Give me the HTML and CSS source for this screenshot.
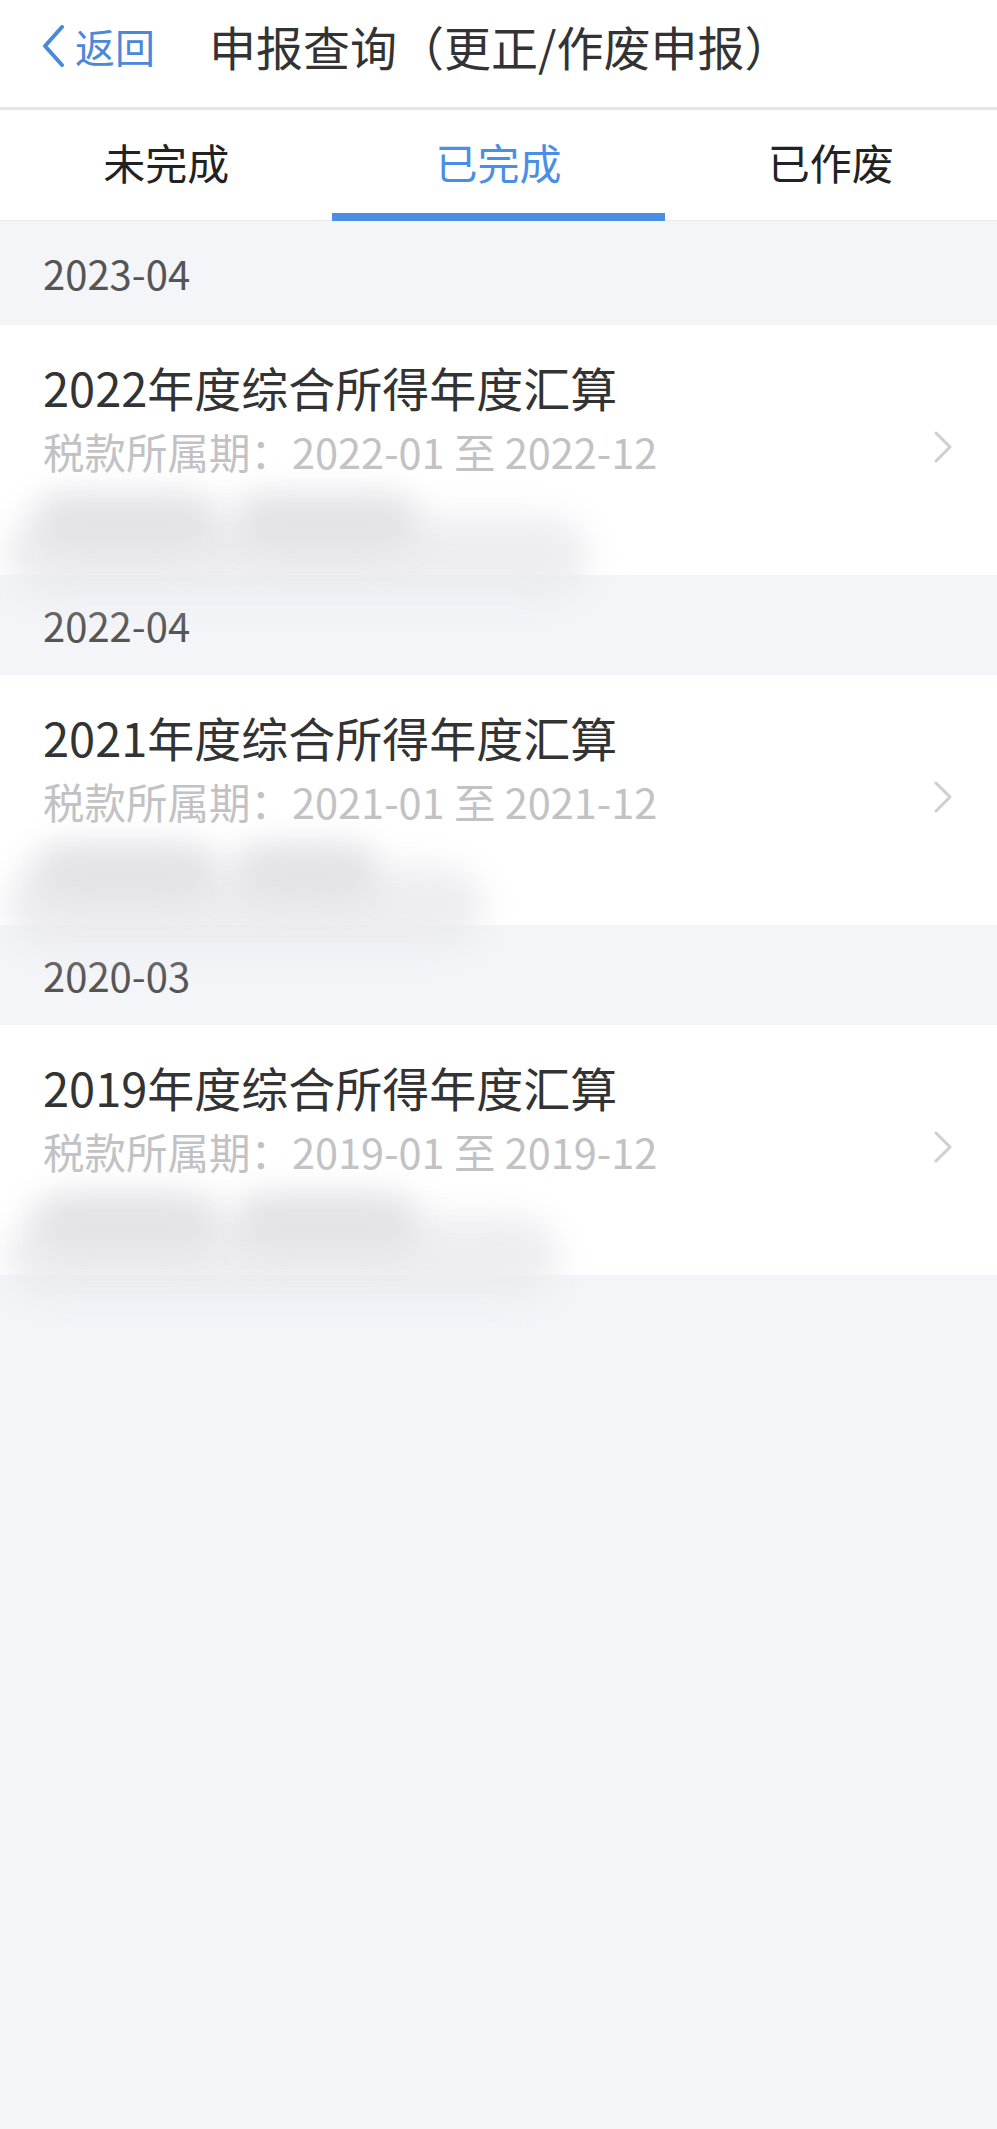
FILE: index.html
```html
<!DOCTYPE html>
<html lang="zh-CN">
<head>
    <meta charset="UTF-8">
    <meta name="viewport" content="width=device-width, initial-scale=1.0">
    <title>申报查询</title>
    <link rel="stylesheet" href="styles.css">
</head>
<body>

<header class="nav">
    <a class="back" href="#">
        <svg class="back-icon" viewBox="0 0 24 42" width="24" height="42">
            <path d="M21 2 L4 21 L21 40" fill="none" stroke="currentColor" stroke-width="4" stroke-linecap="round" stroke-linejoin="round"/>
        </svg>
        <span>返回</span>
    </a>
    <h1 class="title">申报查询（更正/作废申报）</h1>
</header>

<nav class="tabs">
    <div class="tab">未完成</div>
    <div class="tab active">已完成</div>
    <div class="tab">已作废</div>
</nav>

<main class="list">
    <div class="month first">2023-04</div>
    <div class="card">
        <div class="info">
            <div class="name">2022年度综合所得年度汇算</div>
            <div class="period">税款所属期：2022-01 至 2022-12</div>
        </div>
        <svg class="arrow" viewBox="0 0 20 32" width="20" height="32">
            <path d="M3 2 L17 16 L3 30" fill="none" stroke="currentColor" stroke-width="3" stroke-linecap="round" stroke-linejoin="round"/>
        </svg>
        <!-- blurred, hidden amount line -->
        <div class="redact wide">
            <div class="smear"></div>
            <div class="blob b1"></div>
            <div class="blob b2"></div>
        </div>
    </div>

    <div class="month">2022-04</div>
    <div class="card">
        <div class="info">
            <div class="name">2021年度综合所得年度汇算</div>
            <div class="period">税款所属期：2021-01 至 2021-12</div>
        </div>
        <svg class="arrow" viewBox="0 0 20 32" width="20" height="32">
            <path d="M3 2 L17 16 L3 30" fill="none" stroke="currentColor" stroke-width="3" stroke-linecap="round" stroke-linejoin="round"/>
        </svg>
        <div class="redact narrow">
            <div class="smear"></div>
            <div class="blob b1"></div>
            <div class="blob b2 short"></div>
        </div>
    </div>

    <div class="month">2020-03</div>
    <div class="card">
        <div class="info">
            <div class="name">2019年度综合所得年度汇算</div>
            <div class="period">税款所属期：2019-01 至 2019-12</div>
        </div>
        <svg class="arrow" viewBox="0 0 20 32" width="20" height="32">
            <path d="M3 2 L17 16 L3 30" fill="none" stroke="currentColor" stroke-width="3" stroke-linecap="round" stroke-linejoin="round"/>
        </svg>
        <div class="redact">
            <div class="smear"></div>
            <div class="blob b1"></div>
            <div class="blob b2"></div>
        </div>
    </div>
</main>

</body>
</html>
```

FILE: styles.css
```css
body {
    margin: 0;
    padding: 0;
    background-color: #f4f5f9;
    font-family: "Noto Sans CJK SC", "Noto Sans", sans-serif;
    color: #333;
    min-height: 100vh;
}
.nav {
    display: flex;
    align-items: center;
    height: 110px;
    padding-bottom: 16px;
    box-sizing: border-box;
    background-color: #fff;
    border-bottom: 3px solid #e6e6e8;
}
.back {
    display: flex;
    align-items: center;
    gap: 10px;
    margin-left: 41px;
    color: #4a88dc;
    text-decoration: none;
    font-size: 40px;
    line-height: 1;
}
.back-icon {
    display: block;
}
.title {
    margin: 0 0 0 54px;
    font-size: 47px;
    font-weight: normal;
    color: #333;
    line-height: 1;
}
.tabs {
    display: flex;
    height: 111px;
    background-color: #fff;
}
.tab {
    flex: 1;
    display: flex;
    align-items: center;
    justify-content: center;
    font-size: 42px;
    color: #222;
    border-bottom: 1px solid #ececee;
    box-sizing: border-box;
    padding-bottom: 8px;
}
.tab.active {
    color: #4a8ee6;
    border-bottom: 8px solid #4a8ee8;
    padding-bottom: 1px;
}
.month {
    display: flex;
    align-items: center;
    height: 100px;
    padding-left: 43px;
    font-size: 40px;
    color: #555;
    box-sizing: border-box;
}
.month.first {
    height: 104px;
}
.card {
    position: relative;
    display: flex;
    align-items: center;
    height: 250px;
    padding: 0 44px 0 43px;
    box-sizing: border-box;
    background-color: #fff;
}
.info {
    flex: 1;
    align-self: flex-start;
    padding-top: 34px;
}
.name {
    font-size: 47px;
    line-height: 56px;
    color: #333;
}
.period {
    margin-top: 12px;
    font-size: 41.5px;
    line-height: 49px;
    color: #c2c2c4;
}
.arrow {
    color: #cfcfd1;
    margin-top: -6px;
}
/* blurred part of the screenshot */
.redact {
    position: absolute;
    left: 0;
    top: 150px;
    width: 560px;
    height: 130px;
    pointer-events: none;
}
.redact.wide {
    width: 590px;
}
.redact.narrow {
    width: 485px;
}
.smear {
    position: absolute;
    left: 4px;
    right: 0;
    top: 40px;
    height: 84px;
    border-radius: 42px;
    background-color: rgba(234, 234, 238, 0.8);
    filter: blur(16px);
}
.blob {
    position: absolute;
    top: 18px;
    height: 60px;
    border-radius: 24px;
    background-color: #e3e3e6;
    filter: blur(16px);
}
.b1 {
    left: 36px;
    width: 180px;
}
.b2 {
    left: 236px;
    width: 180px;
}
.b2.short {
    width: 140px;
}
```
